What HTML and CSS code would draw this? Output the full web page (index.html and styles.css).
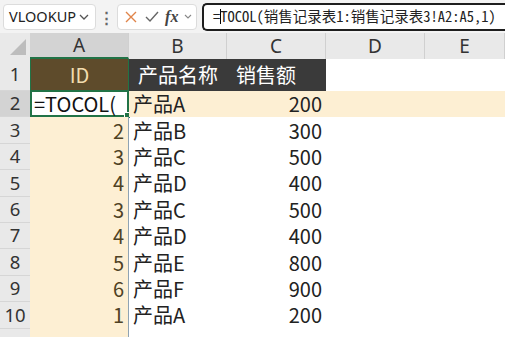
FILE: index.html
```html
<!DOCTYPE html>
<html lang="zh-CN">
<head>
<meta charset="UTF-8">
<meta name="viewport" content="width=device-width, initial-scale=1.0">
<title>TOCOL</title>
<link rel="stylesheet" href="styles.css">
</head>
<body>
<div class="toolbar">
    <div class="namebox">
        <span>VLOOKUP</span>
        <svg class="chev" width="10" height="6" viewBox="0 0 10 6"><path d="M1 1l4 4 4-4" fill="none" stroke="#555" stroke-width="1.3"/></svg>
    </div>
    <div class="dots">⋮</div>
    <div class="fxbox">
        <svg width="14" height="14" viewBox="0 0 14 14"><path d="M2 2l10 10M12 2L2 12" stroke="#e0844a" stroke-width="1.4"/></svg>
        <svg width="16" height="14" viewBox="0 0 16 14"><path d="M2 7l4 4 8-9" fill="none" stroke="#666" stroke-width="1.4"/></svg>
        <span class="fx">fx</span>
        <svg width="8" height="5" viewBox="0 0 8 5"><path d="M1 1l3 3 3-3" fill="none" stroke="#888" stroke-width="1.1"/></svg>
    </div>
    <div class="formula"><span class="caret">=</span>TOCOL(销售记录表1:销售记录表3!A2:A5,1)</div>
</div>

<div class="sheet">
    <!-- column headers -->
    <div class="row head">
        <div class="corner"><svg width="18" height="18" viewBox="0 0 18 18"><path d="M17 1v16H1z" fill="#bdbdbd"/></svg></div>
        <div class="colh sel">A</div>
        <div class="colh">B</div>
        <div class="colh">C</div>
        <div class="colh">D</div>
        <div class="colh">E</div>
    </div>

    <!-- Row 1 -->
    <div class="row tall">
        <div class="rowh">1</div>
        <div class="cell id">ID</div>
        <div class="cell th">产品名称</div>
        <div class="cell th">销售额</div>
        <div class="cell"></div>
        <div class="cell"></div>
    </div>

    <!-- Row 2 -->
    <div class="row hl">
        <div class="rowh sel">2</div>
        <div class="cell active">=TOCOL(<span class="handle"></span></div>
        <div class="cell">产品A</div>
        <div class="cell num">200</div>
        <div class="cell"></div>
        <div class="cell"></div>
    </div>

    <div class="row">
        <div class="rowh">3</div>
        <div class="cell colA">2</div>
        <div class="cell">产品B</div>
        <div class="cell num">300</div>
        <div class="cell"></div>
        <div class="cell"></div>
    </div>
    <div class="row">
        <div class="rowh">4</div>
        <div class="cell colA">3</div>
        <div class="cell">产品C</div>
        <div class="cell num">500</div>
        <div class="cell"></div>
        <div class="cell"></div>
    </div>
    <div class="row">
        <div class="rowh">5</div>
        <div class="cell colA">4</div>
        <div class="cell">产品D</div>
        <div class="cell num">400</div>
        <div class="cell"></div>
        <div class="cell"></div>
    </div>
    <div class="row">
        <div class="rowh">6</div>
        <div class="cell colA">3</div>
        <div class="cell">产品C</div>
        <div class="cell num">500</div>
        <div class="cell"></div>
        <div class="cell"></div>
    </div>
    <div class="row">
        <div class="rowh">7</div>
        <div class="cell colA">4</div>
        <div class="cell">产品D</div>
        <div class="cell num">400</div>
        <div class="cell"></div>
        <div class="cell"></div>
    </div>
    <div class="row">
        <div class="rowh">8</div>
        <div class="cell colA">5</div>
        <div class="cell">产品E</div>
        <div class="cell num">800</div>
        <div class="cell"></div>
        <div class="cell"></div>
    </div>
    <div class="row">
        <div class="rowh">9</div>
        <div class="cell colA">6</div>
        <div class="cell">产品F</div>
        <div class="cell num">900</div>
        <div class="cell"></div>
        <div class="cell"></div>
    </div>
    <div class="row">
        <div class="rowh">10</div>
        <div class="cell colA">1</div>
        <div class="cell">产品A</div>
        <div class="cell num">200</div>
        <div class="cell"></div>
        <div class="cell"></div>
    </div>
    <div class="row last">
        <div class="rowh"></div>
        <div class="cell colA"></div>
        <div class="cell"></div>
        <div class="cell"></div>
        <div class="cell"></div>
        <div class="cell"></div>
    </div>
</div>
</body>
</html>
```

FILE: styles.css
```css
html {
    overflow: hidden;
}
body {
    margin: 0;
    width: 505px;
    height: 337px;
    overflow: hidden;
    background-color: #fff;
    font-family: "Noto Sans CJK SC", "Noto Sans", sans-serif;
    color: #222;
}
.toolbar {
    height: 33px;
    background-color: #f3f3f3;
    display: flex;
    align-items: center;
    padding-left: 3px;
    box-sizing: border-box;
}
.namebox {
    width: 93px;
    height: 26px;
    box-sizing: border-box;
    background-color: #fff;
    border: 1px solid #dcdcdc;
    border-radius: 4px;
    display: flex;
    align-items: center;
    justify-content: space-between;
    padding: 0 6px 0 5px;
    font-family: "Noto Sans", sans-serif;
    font-size: 14.5px;
    line-height: 1;
}
.dots {
    width: 21px;
    text-align: center;
    color: #666;
    font-size: 15px;
    font-weight: bold;
}
.fxbox {
    width: 80px;
    height: 26px;
    box-sizing: border-box;
    background-color: #fff;
    border: 1px solid #dcdcdc;
    border-radius: 4px;
    display: flex;
    align-items: center;
    justify-content: space-between;
    padding: 0 4px 0 6px;
}
.fx {
    font-family: "Liberation Serif", serif;
    font-style: italic;
    font-weight: bold;
    font-size: 16px;
    color: #444;
    line-height: 1;
}
.formula {
    margin-left: 5px;
    flex: 1;
    height: 28px;
    box-sizing: border-box;
    background-color: #fff;
    border: 2px solid #1e1e1e;
    border-right: none;
    border-radius: 5px 0 0 5px;
    padding-left: 9px;
    display: flex;
    align-items: center;
    font-family: "Noto Sans Mono CJK SC", "Liberation Mono", "Noto Sans CJK SC", monospace;
    font-size: 14.5px;
    line-height: 1;
    white-space: nowrap;
    color: #222;
}
.caret {
    border-right: 1px solid #000;
    margin-right: -1px;
}
.row {
    display: grid;
    grid-template-columns: 30px 99px 98px 99px 99px 1fr;
    height: 26.4px;
}
.row.head {
    height: 26px;
}
.row.tall {
    height: 32px;
}
.row.last {
    height: 10px;
}
.corner {
    background-color: #e9e9e9;
    display: flex;
    align-items: flex-end;
    justify-content: flex-end;
    padding: 0 3px 3px 0;
}
.colh {
    background-color: #e9e9e9;
    border-right: 1px solid #d0d0d0;
    display: flex;
    align-items: center;
    justify-content: center;
    font-family: "Noto Sans", sans-serif;
    font-size: 19px;
    line-height: 1;
    color: #333;
}
.colh.sel {
    background-color: #d3d3d3;
    border-bottom: 2px solid #217346;
}
.rowh {
    background-color: #e9e9e9;
    border-bottom: 1px solid #d6d6d6;
    box-sizing: border-box;
    display: flex;
    align-items: center;
    justify-content: center;
    font-family: "Noto Sans", sans-serif;
    font-size: 18.5px;
    line-height: 1;
    color: #333;
}
.rowh.sel {
    background-color: #d3d3d3;
}
.cell {
    display: flex;
    align-items: center;
    padding: 0 4px;
    font-size: 20px;
    line-height: 1;
    white-space: nowrap;
    position: relative;
}
.num {
    justify-content: flex-end;
}
.id {
    background-color: #5e4b2b;
    color: #f2dcae;
    justify-content: center;
    border-left: 1px solid #217346;
    border-right: 1px solid #217346;
}
.th {
    background-color: #3a3a3a;
    color: #fff;
    padding-left: 9px;
}
.row.hl .cell {
    background-color: #fdefd3;
}
.row.hl .cell.active {
    background-color: #fff;
    border: 2px solid #217346;
    padding-left: 2px;
    margin-top: -1px;
    color: #111;
}
.handle {
    position: absolute;
    right: -4px;
    bottom: -4px;
    width: 5px;
    height: 5px;
    background-color: #217346;
    border: 1px solid #fff;
}
.colA {
    background-color: #fdefd3;
    justify-content: flex-end;
    color: #4f4224;
    border-right: 1px solid #8fa3b3;
}
```
